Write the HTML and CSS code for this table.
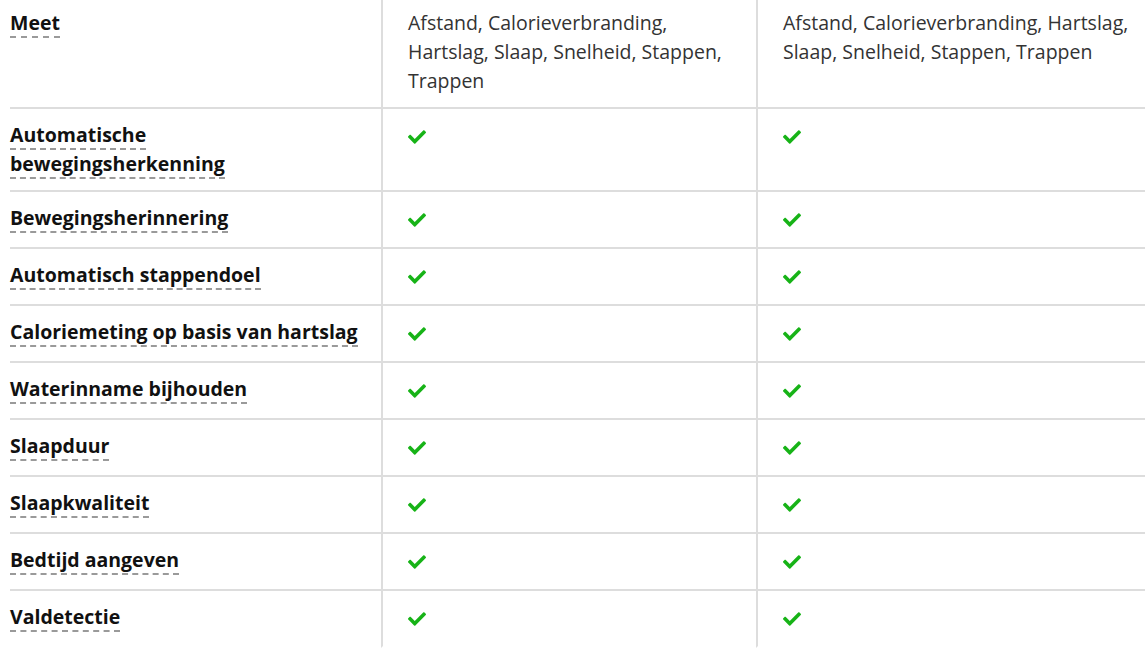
FILE: index.html
```html
<!DOCTYPE html>
<html lang="nl">
<head>
<meta charset="utf-8">
<title>Vergelijking</title>
<link rel="stylesheet" href="styles.css">
</head>
<body>
<div class="table">
  <div class="row first">
    <div class="cell label"><span class="term">Meet</span></div>
    <div class="cell value">Afstand, Calorieverbranding, Hartslag, Slaap, Snelheid, Stappen, Trappen</div>
    <div class="cell value">Afstand, Calorieverbranding, Hartslag, Slaap, Snelheid, Stappen, Trappen</div>
  </div>
  <div class="row">
    <div class="cell label"><span class="term">Automatische bewegingsherkenning</span></div>
    <div class="cell value check"><svg viewBox="0 62 512 388" width="18" height="14"><path d="M173.9 439.4l-166.4-166.4c-10-10-10-26.2 0-36.2l36.2-36.2c10-10 26.2-10 36.2 0L192 312.7 432.1 72.6c10-10 26.2-10 36.2 0l36.2 36.2c10 10 10 26.2 0 36.2l-294.4 294.4c-10 10-26.2 10-36.2 0z"/></svg></div>
    <div class="cell value check"><svg viewBox="0 62 512 388" width="18" height="14"><path d="M173.9 439.4l-166.4-166.4c-10-10-10-26.2 0-36.2l36.2-36.2c10-10 26.2-10 36.2 0L192 312.7 432.1 72.6c10-10 26.2-10 36.2 0l36.2 36.2c10 10 10 26.2 0 36.2l-294.4 294.4c-10 10-26.2 10-36.2 0z"/></svg></div>
  </div>
  <div class="row">
    <div class="cell label"><span class="term">Bewegingsherinnering</span></div>
    <div class="cell value check"><svg viewBox="0 62 512 388" width="18" height="14"><path d="M173.9 439.4l-166.4-166.4c-10-10-10-26.2 0-36.2l36.2-36.2c10-10 26.2-10 36.2 0L192 312.7 432.1 72.6c10-10 26.2-10 36.2 0l36.2 36.2c10 10 10 26.2 0 36.2l-294.4 294.4c-10 10-26.2 10-36.2 0z"/></svg></div>
    <div class="cell value check"><svg viewBox="0 62 512 388" width="18" height="14"><path d="M173.9 439.4l-166.4-166.4c-10-10-10-26.2 0-36.2l36.2-36.2c10-10 26.2-10 36.2 0L192 312.7 432.1 72.6c10-10 26.2-10 36.2 0l36.2 36.2c10 10 10 26.2 0 36.2l-294.4 294.4c-10 10-26.2 10-36.2 0z"/></svg></div>
  </div>
  <div class="row">
    <div class="cell label"><span class="term">Automatisch stappendoel</span></div>
    <div class="cell value check"><svg viewBox="0 62 512 388" width="18" height="14"><path d="M173.9 439.4l-166.4-166.4c-10-10-10-26.2 0-36.2l36.2-36.2c10-10 26.2-10 36.2 0L192 312.7 432.1 72.6c10-10 26.2-10 36.2 0l36.2 36.2c10 10 10 26.2 0 36.2l-294.4 294.4c-10 10-26.2 10-36.2 0z"/></svg></div>
    <div class="cell value check"><svg viewBox="0 62 512 388" width="18" height="14"><path d="M173.9 439.4l-166.4-166.4c-10-10-10-26.2 0-36.2l36.2-36.2c10-10 26.2-10 36.2 0L192 312.7 432.1 72.6c10-10 26.2-10 36.2 0l36.2 36.2c10 10 10 26.2 0 36.2l-294.4 294.4c-10 10-26.2 10-36.2 0z"/></svg></div>
  </div>
  <div class="row">
    <div class="cell label"><span class="term">Caloriemeting op basis van hartslag</span></div>
    <div class="cell value check"><svg viewBox="0 62 512 388" width="18" height="14"><path d="M173.9 439.4l-166.4-166.4c-10-10-10-26.2 0-36.2l36.2-36.2c10-10 26.2-10 36.2 0L192 312.7 432.1 72.6c10-10 26.2-10 36.2 0l36.2 36.2c10 10 10 26.2 0 36.2l-294.4 294.4c-10 10-26.2 10-36.2 0z"/></svg></div>
    <div class="cell value check"><svg viewBox="0 62 512 388" width="18" height="14"><path d="M173.9 439.4l-166.4-166.4c-10-10-10-26.2 0-36.2l36.2-36.2c10-10 26.2-10 36.2 0L192 312.7 432.1 72.6c10-10 26.2-10 36.2 0l36.2 36.2c10 10 10 26.2 0 36.2l-294.4 294.4c-10 10-26.2 10-36.2 0z"/></svg></div>
  </div>
  <div class="row">
    <div class="cell label"><span class="term">Waterinname bijhouden</span></div>
    <div class="cell value check"><svg viewBox="0 62 512 388" width="18" height="14"><path d="M173.9 439.4l-166.4-166.4c-10-10-10-26.2 0-36.2l36.2-36.2c10-10 26.2-10 36.2 0L192 312.7 432.1 72.6c10-10 26.2-10 36.2 0l36.2 36.2c10 10 10 26.2 0 36.2l-294.4 294.4c-10 10-26.2 10-36.2 0z"/></svg></div>
    <div class="cell value check"><svg viewBox="0 62 512 388" width="18" height="14"><path d="M173.9 439.4l-166.4-166.4c-10-10-10-26.2 0-36.2l36.2-36.2c10-10 26.2-10 36.2 0L192 312.7 432.1 72.6c10-10 26.2-10 36.2 0l36.2 36.2c10 10 10 26.2 0 36.2l-294.4 294.4c-10 10-26.2 10-36.2 0z"/></svg></div>
  </div>
  <div class="row">
    <div class="cell label"><span class="term">Slaapduur</span></div>
    <div class="cell value check"><svg viewBox="0 62 512 388" width="18" height="14"><path d="M173.9 439.4l-166.4-166.4c-10-10-10-26.2 0-36.2l36.2-36.2c10-10 26.2-10 36.2 0L192 312.7 432.1 72.6c10-10 26.2-10 36.2 0l36.2 36.2c10 10 10 26.2 0 36.2l-294.4 294.4c-10 10-26.2 10-36.2 0z"/></svg></div>
    <div class="cell value check"><svg viewBox="0 62 512 388" width="18" height="14"><path d="M173.9 439.4l-166.4-166.4c-10-10-10-26.2 0-36.2l36.2-36.2c10-10 26.2-10 36.2 0L192 312.7 432.1 72.6c10-10 26.2-10 36.2 0l36.2 36.2c10 10 10 26.2 0 36.2l-294.4 294.4c-10 10-26.2 10-36.2 0z"/></svg></div>
  </div>
  <div class="row">
    <div class="cell label"><span class="term">Slaapkwaliteit</span></div>
    <div class="cell value check"><svg viewBox="0 62 512 388" width="18" height="14"><path d="M173.9 439.4l-166.4-166.4c-10-10-10-26.2 0-36.2l36.2-36.2c10-10 26.2-10 36.2 0L192 312.7 432.1 72.6c10-10 26.2-10 36.2 0l36.2 36.2c10 10 10 26.2 0 36.2l-294.4 294.4c-10 10-26.2 10-36.2 0z"/></svg></div>
    <div class="cell value check"><svg viewBox="0 62 512 388" width="18" height="14"><path d="M173.9 439.4l-166.4-166.4c-10-10-10-26.2 0-36.2l36.2-36.2c10-10 26.2-10 36.2 0L192 312.7 432.1 72.6c10-10 26.2-10 36.2 0l36.2 36.2c10 10 10 26.2 0 36.2l-294.4 294.4c-10 10-26.2 10-36.2 0z"/></svg></div>
  </div>
  <div class="row">
    <div class="cell label"><span class="term">Bedtijd aangeven</span></div>
    <div class="cell value check"><svg viewBox="0 62 512 388" width="18" height="14"><path d="M173.9 439.4l-166.4-166.4c-10-10-10-26.2 0-36.2l36.2-36.2c10-10 26.2-10 36.2 0L192 312.7 432.1 72.6c10-10 26.2-10 36.2 0l36.2 36.2c10 10 10 26.2 0 36.2l-294.4 294.4c-10 10-26.2 10-36.2 0z"/></svg></div>
    <div class="cell value check"><svg viewBox="0 62 512 388" width="18" height="14"><path d="M173.9 439.4l-166.4-166.4c-10-10-10-26.2 0-36.2l36.2-36.2c10-10 26.2-10 36.2 0L192 312.7 432.1 72.6c10-10 26.2-10 36.2 0l36.2 36.2c10 10 10 26.2 0 36.2l-294.4 294.4c-10 10-26.2 10-36.2 0z"/></svg></div>
  </div>
  <div class="row last">
    <div class="cell label"><span class="term">Valdetectie</span></div>
    <div class="cell value check"><svg viewBox="0 62 512 388" width="18" height="14"><path d="M173.9 439.4l-166.4-166.4c-10-10-10-26.2 0-36.2l36.2-36.2c10-10 26.2-10 36.2 0L192 312.7 432.1 72.6c10-10 26.2-10 36.2 0l36.2 36.2c10 10 10 26.2 0 36.2l-294.4 294.4c-10 10-26.2 10-36.2 0z"/></svg></div>
    <div class="cell value check"><svg viewBox="0 62 512 388" width="18" height="14"><path d="M173.9 439.4l-166.4-166.4c-10-10-10-26.2 0-36.2l36.2-36.2c10-10 26.2-10 36.2 0L192 312.7 432.1 72.6c10-10 26.2-10 36.2 0l36.2 36.2c10 10 10 26.2 0 36.2l-294.4 294.4c-10 10-26.2 10-36.2 0z"/></svg></div>
  </div>
</div>
</body>
</html>
```

FILE: styles.css
```css
html, body {
  margin: 0;
  padding: 0;
  background: #fff;
}
body {
  font-family: "Open Sans", "Noto Sans", sans-serif;
  font-size: 19.5px;
  line-height: 29px;
  color: #333;
  overflow: hidden;
}
.table {
  margin-left: 10px;
}
.row {
  display: grid;
  grid-template-columns: 371px 375px 1fr;
}
.cell {
  padding: 11px 10px 12px 25px;
  border-bottom: 2px solid #dddddd;
}
.row.first .cell {
  padding-top: 8px;
}
.row.last .cell {
  border-bottom-color: transparent;
}
.cell.label {
  padding-left: 0;
  padding-right: 18px;
}
.cell.value {
  border-left: 2px solid #dddddd;
  color: #333;
}
.cell.check {
  padding-top: 21px;
  padding-bottom: 20px;
}
.cell.check svg {
  display: block;
  fill: #17b317;
}
.term {
  font-weight: 700;
  color: #111;
  border-bottom: 2px dashed #9a9a9a;
}
```
